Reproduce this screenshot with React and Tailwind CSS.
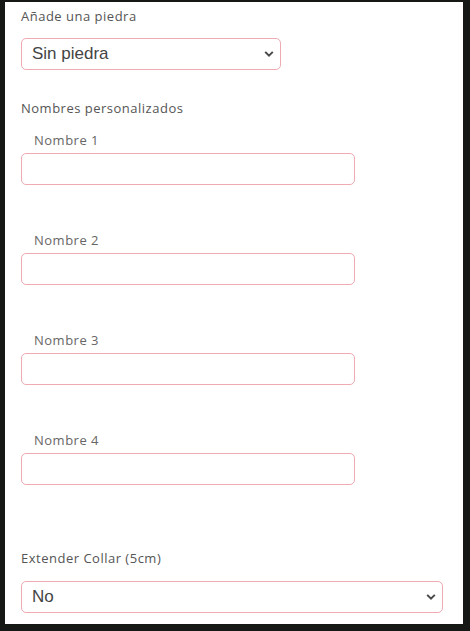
import React, { useState } from 'react'

const labelFont = { fontFamily: '"Open Sans", "Liberation Sans", sans-serif' }
const fieldFont = { fontFamily: '"Liberation Sans", Arial, sans-serif' }

function Chevron() {
  return (
    <svg width="10" height="7" viewBox="0 0 10 7" className="pointer-events-none absolute right-[7px] top-1/2 -translate-y-1/2">
      <path d="M1.2 1.4 L5 5.2 L8.8 1.4" fill="none" stroke="#4a4a4a" strokeWidth="2" />
    </svg>
  )
}

function SelectField({ value, options, onChange, width }) {
  return (
    <div className={`relative ${width}`}>
      <select
        value={value}
        onChange={(e) => onChange(e.target.value)}
        style={fieldFont}
        className="h-8 w-full appearance-none rounded-[5px] border border-[#f0aab2] bg-white pl-[10px] pr-6 text-[17px] text-[#444] outline-none"
      >
        {options.map((o) => (
          <option key={o}>{o}</option>
        ))}
      </select>
      <Chevron />
    </div>
  )
}

function App() {
  const [stone, setStone] = useState('Sin piedra')
  const [extend, setExtend] = useState('No')
  const [names, setNames] = useState(['', '', '', ''])

  return (
    <div className="h-screen w-screen bg-[#161816] pl-[5px] pr-[7px] pt-[2px] pb-[7px]">
      <div className="h-full w-full bg-white px-4 pt-1" style={labelFont}>
        <p className="h-5 text-[13px] leading-5 tracking-[0.5px] text-[#555]">Añade una piedra</p>
        <div className="mt-3">
          <SelectField value={stone} onChange={setStone} options={['Sin piedra', 'Con piedra']} width="w-[260px]" />
        </div>

        <p className="mt-7 h-5 text-[13px] leading-5 tracking-[0.5px] text-[#555]">Nombres personalizados</p>
        <div className="flex flex-col gap-[45px] mt-3">
          {names.map((n, i) => (
            <div key={i}>
              <p className="h-5 pl-[13px] text-[13px] leading-5 tracking-[0.5px] text-[#666]">Nombre {i + 1}</p>
              <input
                value={n}
                onChange={(e) => {
                  const next = [...names]
                  next[i] = e.target.value
                  setNames(next)
                }}
                className="mt-[3px] block h-8 w-[334px] rounded-[5px] border border-[#f0aab2] bg-white px-[10px] text-[15px] outline-none"
              />
            </div>
          ))}
        </div>

        <p className="mt-[63px] h-5 text-[13px] leading-5 tracking-[0.5px] text-[#555]">Extender Collar (5cm)</p>
        <div className="mt-[13px]">
          <SelectField value={extend} onChange={setExtend} options={['No', 'Sí']} width="w-[422px]" />
        </div>
      </div>
    </div>
  )
}

export default App
